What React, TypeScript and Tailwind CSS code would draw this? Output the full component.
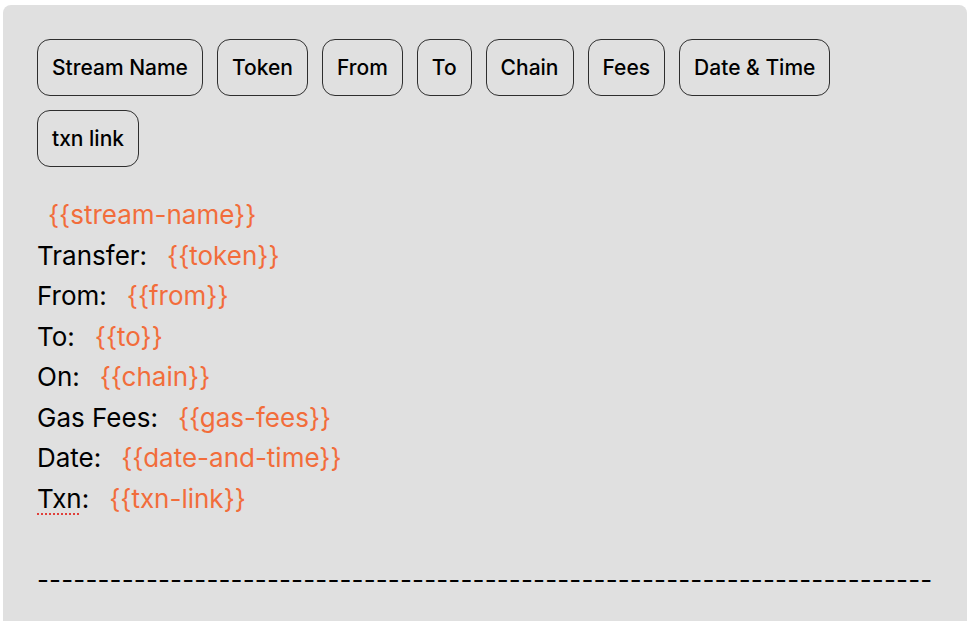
import React from 'react';

const tags = ['Stream Name', 'Token', 'From', 'To', 'Chain', 'Fees', 'Date & Time', 'txn link'];

const lines: { label: string; token: string }[] = [
  { label: 'Transfer:', token: '{{token}}' },
  { label: 'From:', token: '{{from}}' },
  { label: 'To:', token: '{{to}}' },
  { label: 'On:', token: '{{chain}}' },
  { label: 'Gas Fees:', token: '{{gas-fees}}' },
  { label: 'Date:', token: '{{date-and-time}}' },
];

const Token = ({ children }: { children: React.ReactNode }) => (
  <span className="text-[#f26d3b] ml-[20px]">{children}</span>
);

export default function App() {
  return (
    <div className="min-h-screen bg-white pt-[5px] pl-[3px] pr-[8px] font-['Inter',sans-serif]">
      <div className="bg-[#e0e0e0] rounded-t-lg min-h-[616px] pt-[34px] pl-[34px] pr-[35px]">
        <div className="flex flex-wrap gap-[14px]">
          {tags.map(tag => (
            <button
              key={tag}
              className="h-[57px] px-[14px] rounded-[13px] border-[1.5px] border-[#2e2e2e] text-[21px] font-medium text-black bg-transparent"
            >
              {tag}
            </button>
          ))}
        </div>

        <div className="mt-[28px] text-[26px] leading-[40.5px] text-black">
          <div className="-ml-[9px]"><Token>{'{{stream-name}}'}</Token></div>
          {lines.map(l => (
            <div key={l.label}>
              {l.label}
              <Token>{l.token}</Token>
            </div>
          ))}
          <div>
            <span className="underline decoration-dotted decoration-[#e0403a] decoration-2 underline-offset-[6px]">Txn</span>:
            <Token>{'{{txn-link}}'}</Token>
          </div>
          <div className="h-[40.5px]" />
          <div className="whitespace-nowrap tracking-[0.14px]">
            {'-'.repeat(74)}
          </div>
        </div>
      </div>
    </div>
  );
}
